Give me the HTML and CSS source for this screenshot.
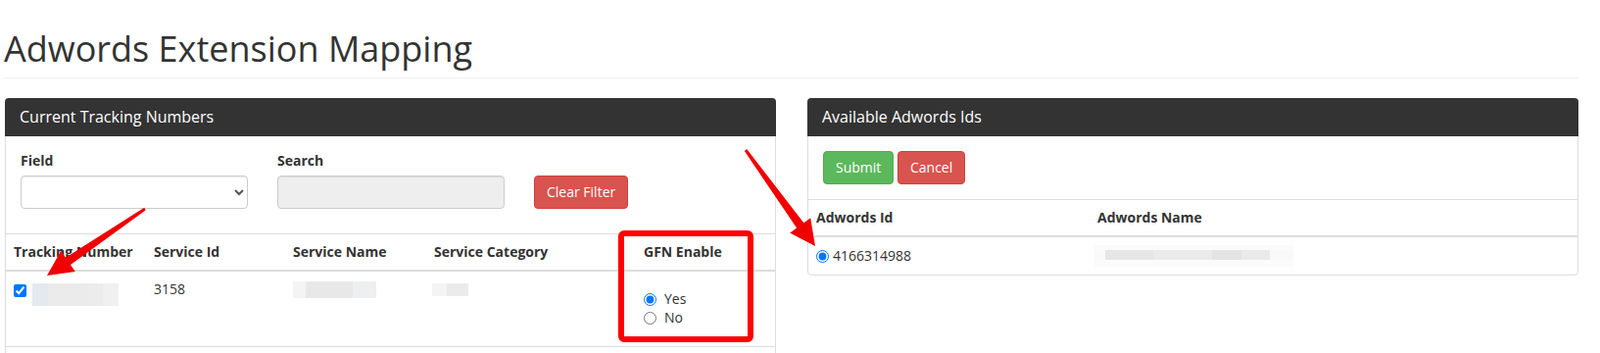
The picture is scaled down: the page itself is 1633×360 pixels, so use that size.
FILE: index.html
```html
<!DOCTYPE html>
<html lang="en">
<head>
  <meta charset="UTF-8">
  <meta name="viewport" content="width=device-width, initial-scale=1.0">
  <title>Adwords Extension Mapping</title>
  <link rel="stylesheet" href="styles.css">
</head>
<body>
<div class="page">
  <div class="page-header">
    <h1>Adwords Extension Mapping</h1>
  </div>

  <div class="columns">
    <!-- tracking numbers -->
    <div class="panel">
      <div class="panel-heading">Current Tracking Numbers</div>
      <div class="panel-body filters">
        <div class="form-group">
          <label for="field">Field</label>
          <select id="field" class="form-control"><option></option></select>
        </div>
        <div class="form-group">
          <label for="search">Search</label>
          <input id="search" class="form-control" type="text" readonly>
        </div>
        <button class="btn btn-danger">Clear Filter</button>
      </div>
      <table class="table tracking">
        <colgroup>
          <col style="width: 143px">
          <col style="width: 142px">
          <col style="width: 144px">
          <col style="width: 214px">
          <col style="width: 142px">
        </colgroup>
        <thead>
          <tr>
            <th>Tracking Number</th>
            <th>Service Id</th>
            <th>Service Name</th>
            <th>Service Category</th>
            <th>GFN Enable</th>
          </tr>
        </thead>
        <tbody>
          <tr>
            <td><input class="check" type="checkbox" checked><span class="blur blur-number"></span></td>
            <td>3158</td>
            <td><span class="blur blur-name"></span></td>
            <td><span class="blur blur-category"></span></td>
            <td>
              <div class="radio-group">
                <label class="radio"><input type="radio" name="gfn" checked>Yes</label>
                <label class="radio"><input type="radio" name="gfn">No</label>
              </div>
            </td>
          </tr>
        </tbody>
      </table>
      <div class="panel-footer"></div>
    </div>

    <!-- adwords ids -->
    <div class="panel panel-short">
      <div class="panel-heading">Available Adwords Ids</div>
      <div class="panel-body">
        <button class="btn btn-success">Submit</button>
        <button class="btn btn-danger">Cancel</button>
      </div>
      <table class="table adwords">
        <colgroup>
          <col style="width: 287px">
          <col>
        </colgroup>
        <thead>
          <tr>
            <th>Adwords Id</th>
            <th>Adwords Name</th>
          </tr>
        </thead>
        <tbody>
          <tr>
            <td><label class="pick"><input type="radio" name="adwords" checked>4166314988</label></td>
            <td><span class="blur blur-adname"></span></td>
          </tr>
        </tbody>
      </table>
    </div>
  </div>

  <!-- screenshot annotations -->
  <svg class="annotations" width="1633" height="360" viewBox="0 0 1633 360">
    <rect x="634" y="238" width="132" height="108" rx="3" fill="none" stroke="#ff0000" stroke-width="6"/>
    <polygon fill="#f00000" points="148.8,214.2 72,270.1 76.8,277.1 48,281 62.2,255.7 67,262.7 147.2,211.8"/>
    <polygon fill="#f00000" points="762.2,152.1 820.3,227.3 827.2,222.3 832,251 806.2,237.5 813.1,232.5 759.8,153.9"/>
  </svg>
</div>
</body>
</html>
```

FILE: styles.css
```css
body {
  font-family: "Open Sans", "Liberation Sans", sans-serif;
  font-size: 14px;
  line-height: 20px;
  color: #333;
  background-color: #fff;
  margin: 0;
}
.page {
  position: relative;
  padding: 30px 22px 0 5px;
  height: 330px;
  overflow: hidden;
}
.page-header {
  padding-bottom: 9px;
  border-bottom: 1px solid #eee;
  margin-bottom: 20px;
  margin-left: -1px;
}
h1 {
  margin: 0;
  font-size: 36px;
  font-weight: 400;
  line-height: 39.6px;
}
.columns {
  display: grid;
  grid-template-columns: 1fr 1fr;
  gap: 32px;
  align-items: start;
}
.panel {
  border: 1px solid #ddd;
  border-radius: 4px;
  background: #fff;
}
.panel-heading {
  margin: -1px -1px 0;
  padding: 10px 15px;
  background-color: #333;
  color: #fff;
  font-size: 16px;
  line-height: 19px;
  border-radius: 4px 4px 0 0;
}
.panel-body {
  padding: 15px;
}
.panel-footer {
  height: 40px;
}
.filters {
  display: flex;
  align-items: flex-end;
  gap: 30px;
  padding-bottom: 25px;
}
.form-group {
  width: 232px;
}
.form-group label {
  display: block;
  font-weight: 700;
  margin-bottom: 5px;
}
.form-control {
  display: block;
  width: 100%;
  height: 34px;
  box-sizing: border-box;
  padding: 6px 12px;
  font-family: inherit;
  font-size: 14px;
  color: #555;
  background-color: #fff;
  border: 1px solid #ccc;
  border-radius: 4px;
  box-shadow: inset 0 1px 1px rgba(0, 0, 0, 0.075);
}
#search {
  background-color: #eee;
}
.btn {
  height: 34px;
  padding: 6px 12px;
  font-family: inherit;
  font-size: 14px;
  line-height: 20px;
  color: #fff;
  border: 1px solid transparent;
  border-radius: 4px;
  cursor: pointer;
}
.btn-danger {
  background-color: #d9534f;
  border-color: #d43f3a;
}
.btn-success {
  background-color: #5cb85c;
  border-color: #4cae4c;
}
.table {
  width: 100%;
  border-collapse: collapse;
  table-layout: fixed;
  border-top: 1px solid #ddd;
}
.table th,
.table td {
  padding: 8px;
  text-align: left;
  vertical-align: top;
  line-height: 20px;
}
.table th {
  font-weight: 700;
  border-bottom: 2px solid #ddd;
}
.tracking td {
  border-bottom: 1px solid #ddd;
}
.adwords td {
  padding-top: 9px;
}
.check {
  margin: 5px 6px 0 0;
  vertical-align: top;
}
.blur {
  display: inline-block;
  vertical-align: top;
}
.blur-number {
  width: 88px;
  height: 23px;
  margin-top: 4px;
  background: linear-gradient(to right, #e4e9f0 0 16px, #ebebeb 16px 56px, #ececec 56px 72px, #f0f0f0 72px);
}
.blur-name {
  width: 85px;
  height: 17px;
  margin-top: 2px;
  background: linear-gradient(to right, #f4f4f4 0 13px, #e8e8e8 13px 61px, #eeeff1 61px);
}
.blur-category {
  width: 37px;
  height: 13px;
  margin-top: 4px;
  margin-left: -2px;
  background: linear-gradient(to right, #f4f4f4 0 15px, #ebebeb 15px);
}
.blur-adname {
  width: 203px;
  height: 22px;
  margin-top: -1px;
  margin-left: -3px;
  background-color: #fbfbfb;
  background-image: linear-gradient(to right, #fafafa 0 11px, #e6e6e6 11px 60px, #ebebeb 60px 120px, #e4e4e4 120px 150px, #eaeaea 150px 179px, #f9f9f9 179px);
  background-size: 100% 10px;
  background-position: 0 5px;
  background-repeat: no-repeat;
}
.radio-group {
  padding: 11px 0;
}
.radio {
  display: flex;
  align-items: center;
  height: 19px;
}
.radio input {
  margin: 0 8px 0 0;
}
.pick input {
  margin: 4px 4px 0 0;
  vertical-align: top;
}
.annotations {
  position: absolute;
  top: 0;
  left: 0;
  pointer-events: none;
}
```
